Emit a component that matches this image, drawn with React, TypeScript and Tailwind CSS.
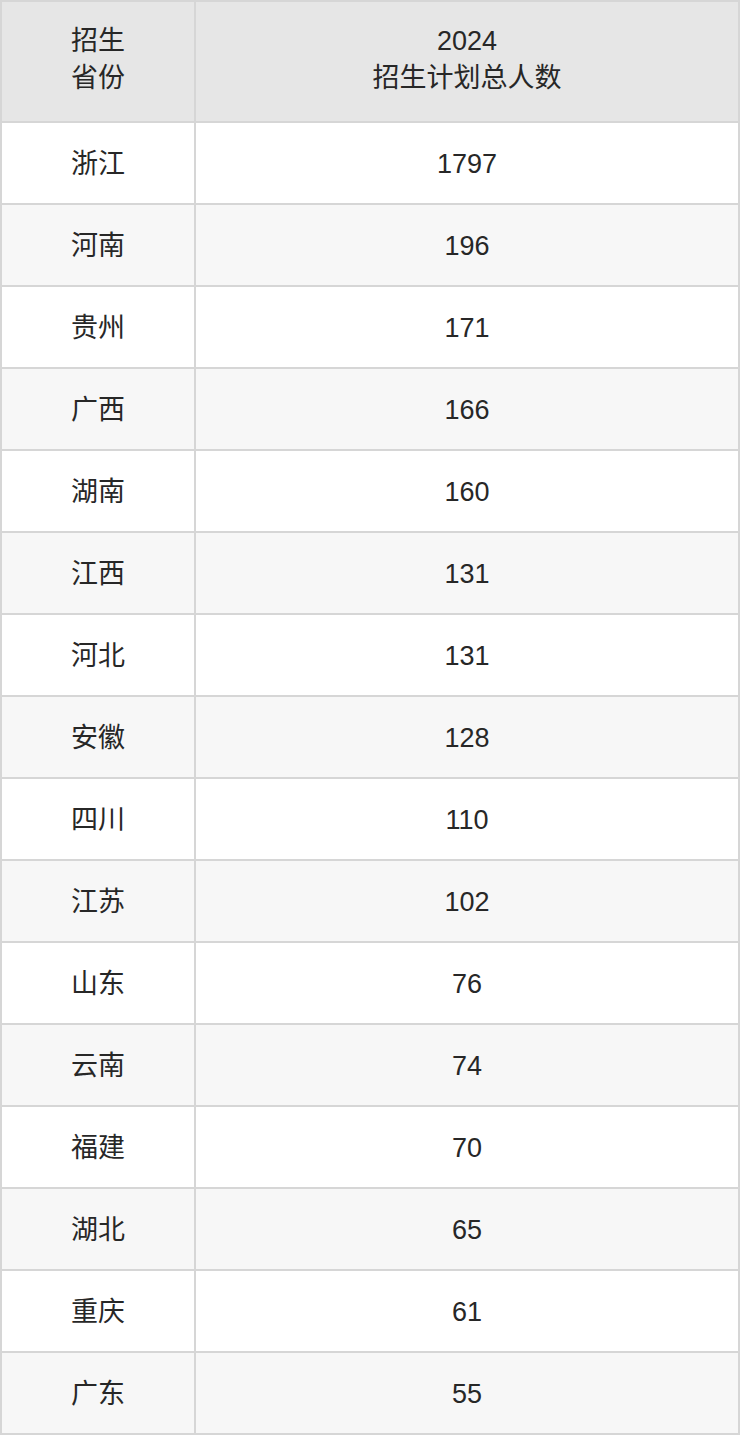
const rows: [string, number][] = [
  ["浙江", 1797],
  ["河南", 196],
  ["贵州", 171],
  ["广西", 166],
  ["湖南", 160],
  ["江西", 131],
  ["河北", 131],
  ["安徽", 128],
  ["四川", 110],
  ["江苏", 102],
  ["山东", 76],
  ["云南", 74],
  ["福建", 70],
  ["湖北", 65],
  ["重庆", 61],
  ["广东", 55],
]

export default function App() {
  return (
    <div
      className="w-[740px] bg-white text-[#272727]"
      style={{ fontFamily: '"Liberation Sans", "Noto Sans CJK SC", sans-serif' }}
    >
      <table className="w-full border-collapse text-[27px] leading-[37px]">
        <thead>
          <tr className="bg-[#e6e6e6]">
            <th className="w-[194px] h-[121px] pb-[3px] border-2 border-[#d6d6d6] font-normal text-center align-middle">
              招生
              <br />
              省份
            </th>
            <th className="h-[121px] pb-[3px] border-2 border-[#d6d6d6] font-normal text-center align-middle">
              2024
              <br />
              招生计划总人数
            </th>
          </tr>
        </thead>
        <tbody>
          {rows.map(([province, count], i) => (
            <tr key={province} className={i % 2 === 1 ? "bg-[#f7f7f7]" : "bg-white"}>
              <td className="h-[82px] pt-[2px] border-2 border-[#d6d6d6] text-center align-middle">{province}</td>
              <td className="h-[82px] pt-[2px] border-2 border-[#d6d6d6] text-center align-middle">{count}</td>
            </tr>
          ))}
        </tbody>
      </table>
    </div>
  )
}
